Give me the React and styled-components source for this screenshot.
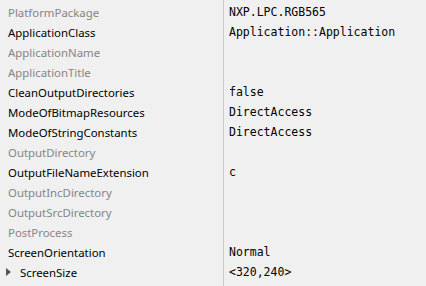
import styled, { createGlobalStyle } from 'styled-components'

const GlobalStyle = createGlobalStyle`
    html, body {
        margin: 0;
        padding: 0;
        background-color: #f0f0f0;
    }
`

const properties = [
    { name: 'PlatformPackage', value: 'NXP.LPC.RGB565', dim: true },
    { name: 'ApplicationClass', value: 'Application::Application' },
    { name: 'ApplicationName', value: '', dim: true },
    { name: 'ApplicationTitle', value: '', dim: true },
    { name: 'CleanOutputDirectories', value: 'false' },
    { name: 'ModeOfBitmapResources', value: 'DirectAccess' },
    { name: 'ModeOfStringConstants', value: 'DirectAccess' },
    { name: 'OutputDirectory', value: '', dim: true },
    { name: 'OutputFileNameExtension', value: 'c' },
    { name: 'OutputIncDirectory', value: '', dim: true },
    { name: 'OutputSrcDirectory', value: '', dim: true },
    { name: 'PostProcess', value: '', dim: true },
    { name: 'ScreenOrientation', value: 'Normal' },
    { name: 'ScreenSize', value: '<320,240>', expandable: true },
]

const App = () => {
    return (
        <>
            <GlobalStyle />
            <Grid>
                <NameColumn>
                    {properties.map((p) => (
                        <NameCell key={p.name} $dim={p.dim} $indent={p.expandable}>
                            {p.expandable && <Arrow />}
                            {p.name}
                        </NameCell>
                    ))}
                </NameColumn>
                <ValueColumn>
                    {properties.map((p) => (
                        <ValueCell key={p.name}>{p.value}</ValueCell>
                    ))}
                </ValueColumn>
            </Grid>
        </>
    )
}

const Grid = styled.div`
    display: flex;
    height: 286px;
    background-color: #f0f0f0;
`

const NameColumn = styled.div`
    width: 223px;
    padding-top: 2px;
    display: flex;
    flex-direction: column;
`

const ValueColumn = styled.div`
    flex: 1;
    padding-top: 2px;
    border-left: 1px solid #c8c8c8;
    display: flex;
    flex-direction: column;
`

const NameCell = styled.div`
    height: 20px;
    display: flex;
    align-items: center;
    padding-left: ${(p) => (p.$indent ? '6px' : '8px')};
    font-family: 'Noto Sans', 'Open Sans', sans-serif;
    font-size: 11.4px;
    color: ${(p) => (p.$dim ? '#858585' : '#000')};
    white-space: nowrap;
`

const Arrow = styled.span`
    width: 0;
    height: 0;
    border-top: 4px solid transparent;
    border-bottom: 4px solid transparent;
    border-left: 5px solid #555;
    margin-right: 9px;
`

const ValueCell = styled.div`
    height: 20px;
    display: flex;
    align-items: center;
    padding-left: 5px;
    font-family: 'DejaVu Sans Mono', 'Liberation Mono', monospace;
    font-size: 11.5px;
    color: #000;
    white-space: nowrap;
`

export default App
